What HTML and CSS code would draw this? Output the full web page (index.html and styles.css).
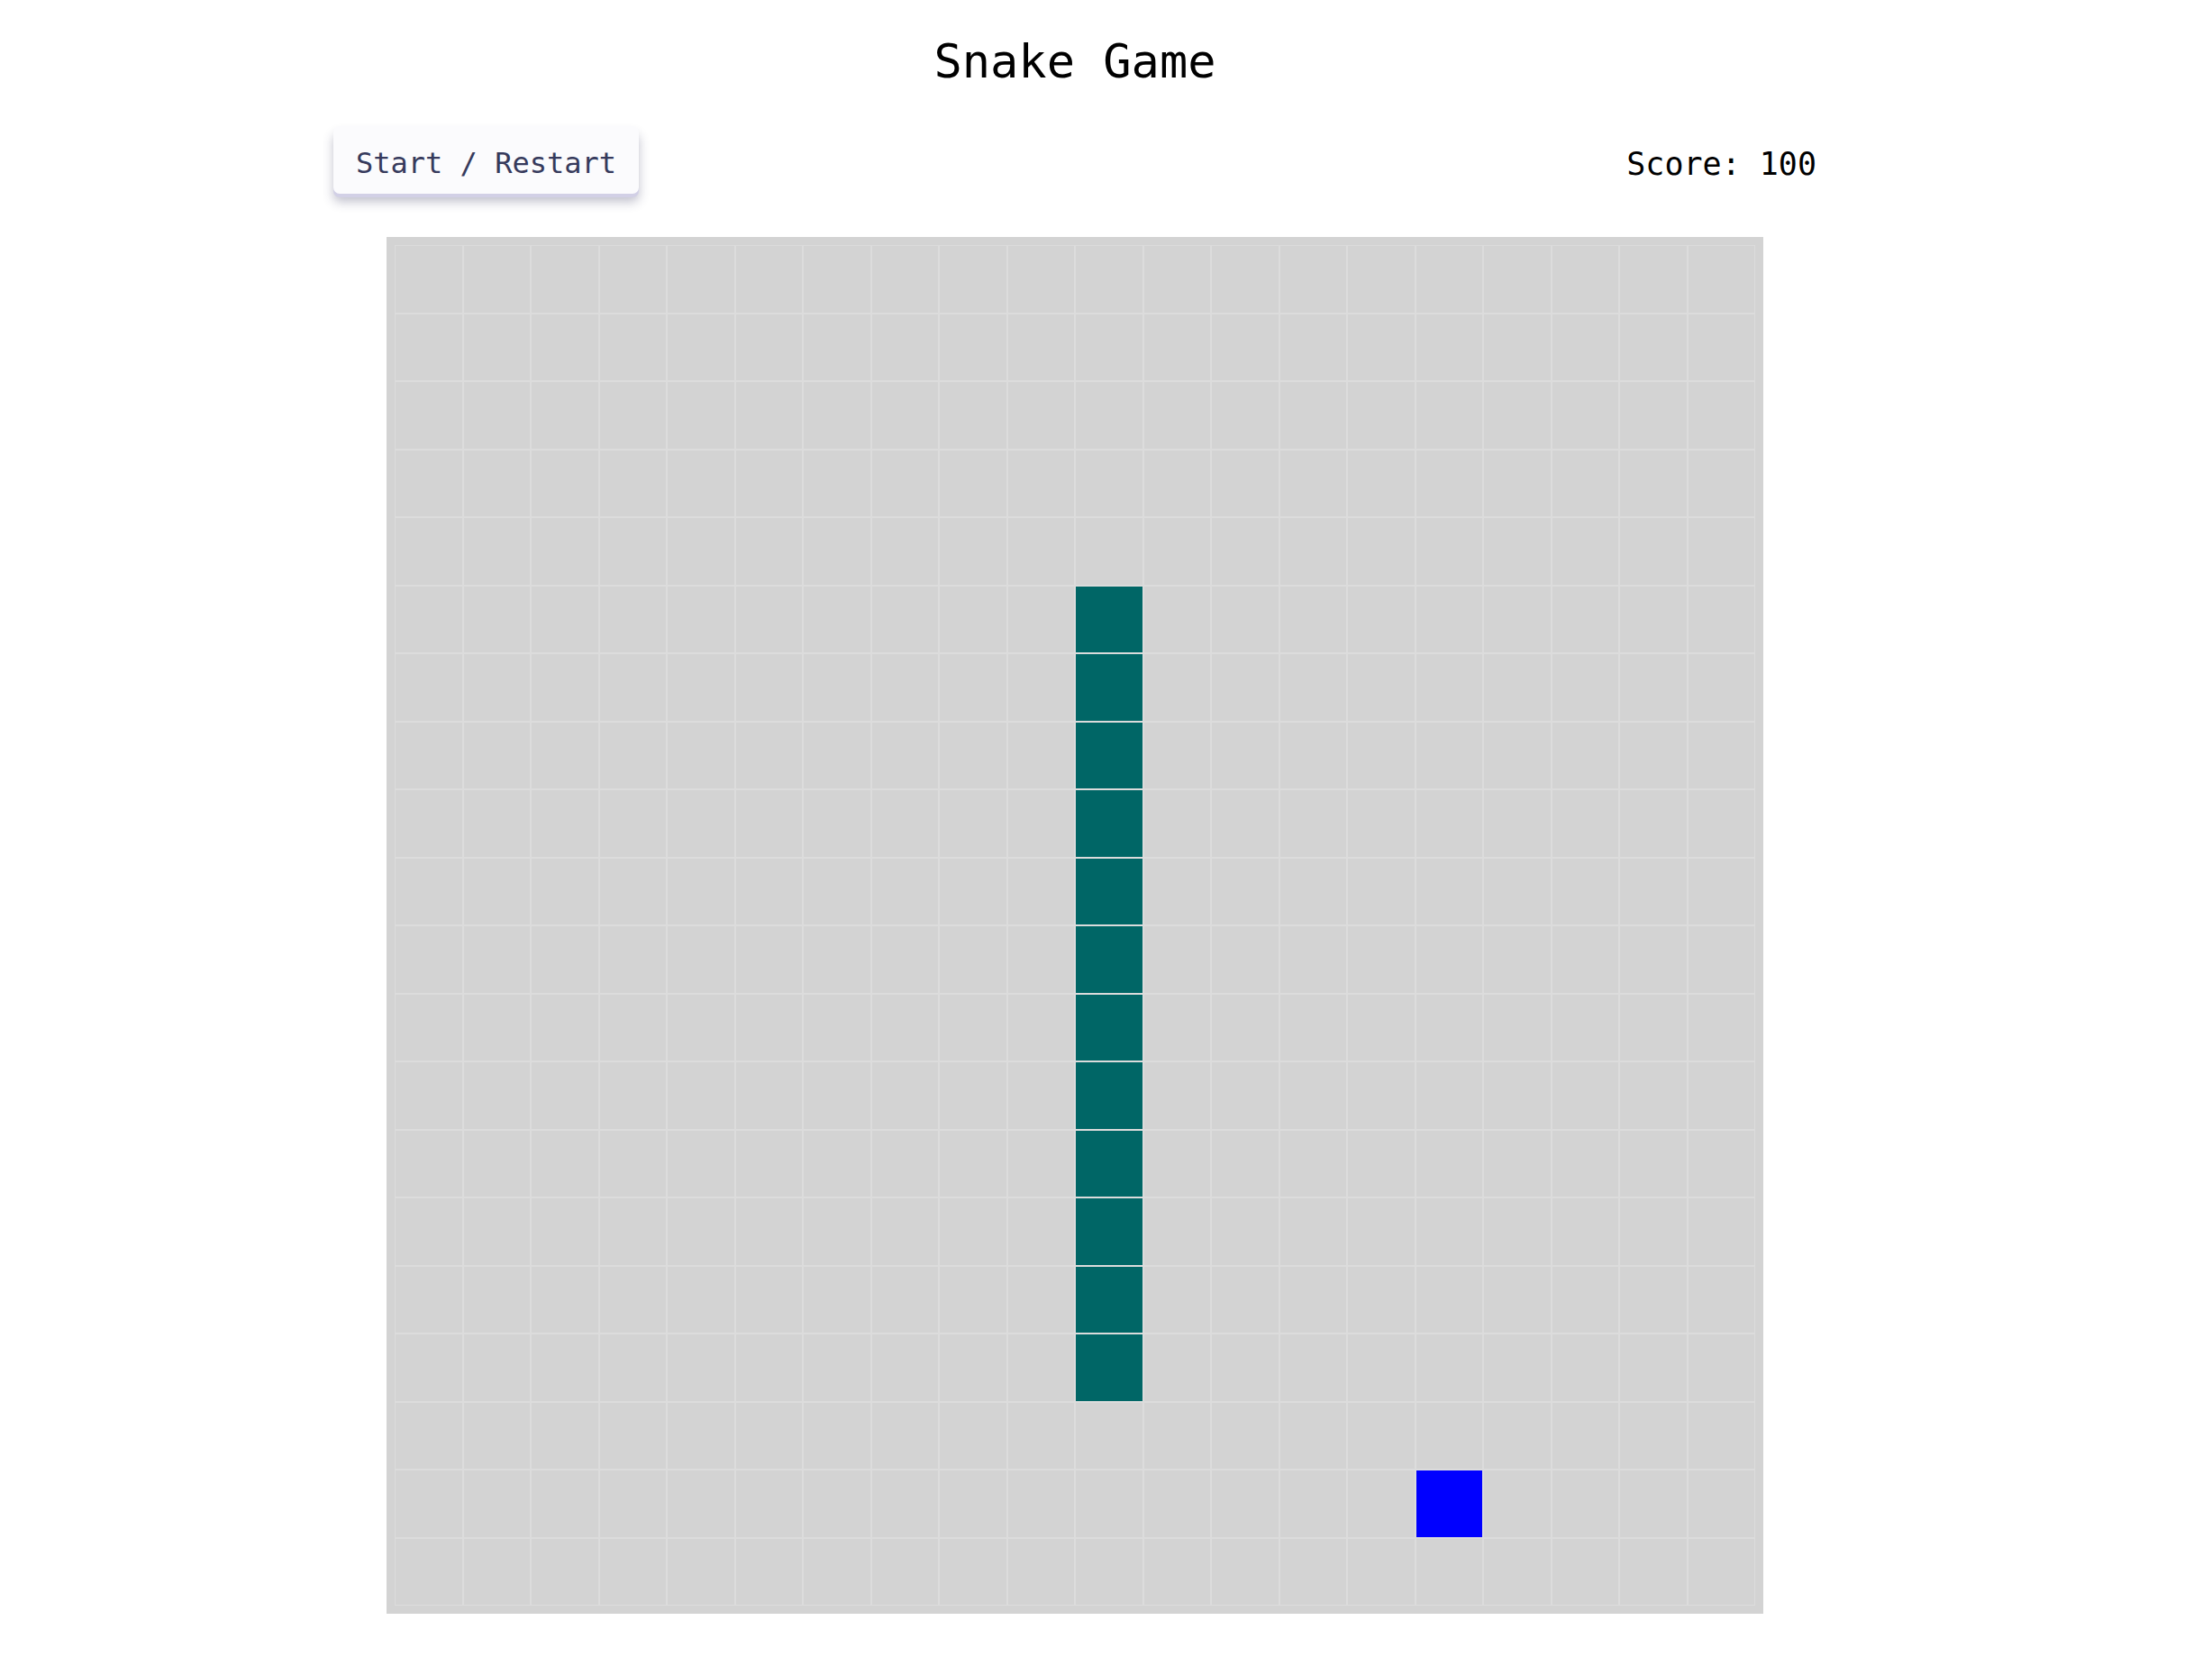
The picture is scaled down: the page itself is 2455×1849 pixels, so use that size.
FILE: index.html
```html
<!DOCTYPE html>
<html lang="en">
<head>
<meta charset="utf-8">
<title>Snake Game</title>
<link rel="stylesheet" href="styles.css">
</head>
<body>
<div class="page">
  <h1 class="title">Snake Game</h1>
  <div class="topbar">
    <button class="btn" type="button">Start / Restart</button>
    <div class="score">Score: 100</div>
  </div>
  <div class="board" id="board"></div>
</div>
<script src="script.js"></script>
</body>
</html>
```

FILE: styles.css
```css
html, body {
  margin: 0;
  padding: 0;
  background: #ffffff;
}
.page {
  width: 2386px;
  display: flex;
  flex-direction: column;
  align-items: center;
  font-family: "DejaVu Sans Mono", "Liberation Mono", monospace;
  color: #000;
}
.title {
  margin: 0;
  padding-top: 37px;
  font-size: 52px;
  line-height: 62px;
  font-weight: normal;
}
.topbar {
  margin-top: 41px;
  width: 1646px;
  display: flex;
  justify-content: space-between;
  align-items: flex-start;
}
.btn {
  font-family: inherit;
  font-size: 32px;
  line-height: 39px;
  color: #363a5c;
  background: #fbfbfd;
  border: none;
  border-radius: 7px;
  padding: 22px 25px 14px;
  width: 339px;
  box-shadow: 0 4px 0 #d2d0e6, 0 9px 12px rgba(50, 50, 90, 0.3);
  cursor: pointer;
}
.score {
  margin-top: 22px;
  font-size: 35px;
  line-height: 40px;
}
.board {
  margin-top: 48px;
  width: 1510px;
  height: 1510px;
  padding: 9px;
  background: #d3d3d3;
  display: grid;
  grid-template-columns: repeat(20, 1fr);
  grid-template-rows: repeat(20, 1fr);
}
.cell {
  border: 1px solid #dcdcdc;
}
.cell.snake {
  background: #006666;
}
.cell.food {
  background: #0000ff;
}
```

FILE: script.js
```js
(function () {
  var board = document.getElementById('board');
  var snake = {};
  for (var r = 5; r <= 16; r++) snake[r + ',10'] = true;
  for (var y = 0; y < 20; y++) {
    for (var x = 0; x < 20; x++) {
      var d = document.createElement('div');
      d.className = 'cell';
      if (snake[y + ',' + x]) d.className += ' snake';
      if (y === 18 && x === 15) d.className += ' food';
      board.appendChild(d);
    }
  }
})();
```
